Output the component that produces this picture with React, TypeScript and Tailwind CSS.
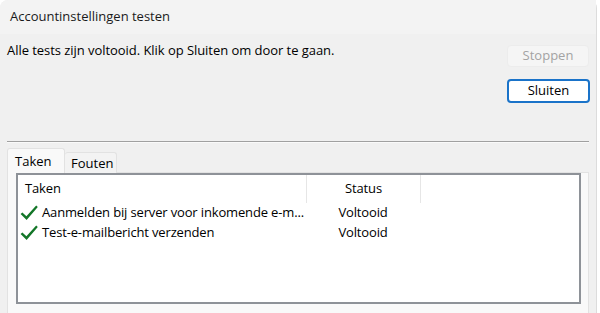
const font = { fontFamily: '"Open Sans", "Noto Sans", sans-serif' };

function Check() {
  return (
    <svg width="18" height="16" viewBox="0 0 18 16" className="shrink-0">
      <path d="M0.6 9 L2.4 7.4 L6.4 11.2 L16.2 0.6 L17.8 2 L6.6 15 Z" fill="#137628" />
    </svg>
  );
}

const tasks = [
  { name: 'Aanmelden bij server voor inkomende e-m...', status: 'Voltooid' },
  { name: 'Test-e-mailbericht verzenden', status: 'Voltooid' },
];

export default function App() {
  return (
    <div className="w-[600px] h-[313px] bg-white overflow-hidden" style={font}>
      <div className="w-[597px] h-[322px] bg-[#f0f0f0] rounded-tl-[8px] rounded-r-[8px] border-r border-[#dcdcdc] flex flex-col text-[13px] text-black">
        <div className="h-[34px] shrink-0 flex items-center pl-[10px] bg-[#f3f3f3] rounded-tl-[8px] text-[#1a1a1a]">
          Accountinstellingen testen
        </div>

        <div className="flex justify-between pl-[7px] pr-[6px] pt-[8px] font-medium">
          <p className="leading-[16px] tracking-[-0.05px]">Alle tests zijn voltooid. Klik op Sluiten om door te gaan.</p>
          <div className="flex flex-col gap-[12px] mt-[3px]">
            <button className="w-[82px] h-[22px] rounded-[4px] bg-[#f5f5f5] border border-[#ececec] text-[#a3a3a3]">
              Stoppen
            </button>
            <button className="w-[83px] h-[24px] rounded-[4px] bg-white border-2 border-[#1a73c9] text-black">
              Sluiten
            </button>
          </div>
        </div>

        <div className="mx-[7px] mt-[38px] h-[2px] border-t border-[#a0a0a0] border-b border-b-[#fafafa]" />

        <div className="mx-[7px] mt-[5px] flex items-end h-[25px] relative z-10 font-medium">
          <div className="w-[58px] h-[25px] bg-[#f9f9f9] border border-[#e2e2e2] border-b-0 rounded-t-[3px] pl-[7px] pt-[3px]">
            Taken
          </div>
          <div className="w-[52px] h-[21px] bg-[#f3f3f3] border border-[#e2e2e2] border-b-0 border-l-0 rounded-t-[3px] pl-[6px] pt-[1px]">
            Fouten
          </div>
        </div>

        <div className="mx-[7px] -mt-[1px] bg-[#f9f9f9] border border-[#e2e2e2] pl-[8px] pr-[7px] pb-[6px] flex-1">
          <div className="h-[131px] bg-white border-2 border-[#8e9298] font-medium tracking-[-0.15px]">
            <div className="flex h-[28px]">
              <div className="w-[288px] pl-[7px] flex items-center">Taken</div>
              <div className="w-[114px] border-l border-[#e6e6e6] flex items-center justify-center">Status</div>
              <div className="flex-1 border-l border-[#e6e6e6]" />
            </div>
            {tasks.map((t) => (
              <div key={t.name} className="flex h-[20px] items-center">
                <div className="w-[288px] pl-[2px] flex items-center gap-[4px]">
                  <Check />
                  <span className="whitespace-nowrap">{t.name}</span>
                </div>
                <div className="w-[114px] text-center">{t.status}</div>
              </div>
            ))}
          </div>
        </div>
      </div>
    </div>
  );
}
